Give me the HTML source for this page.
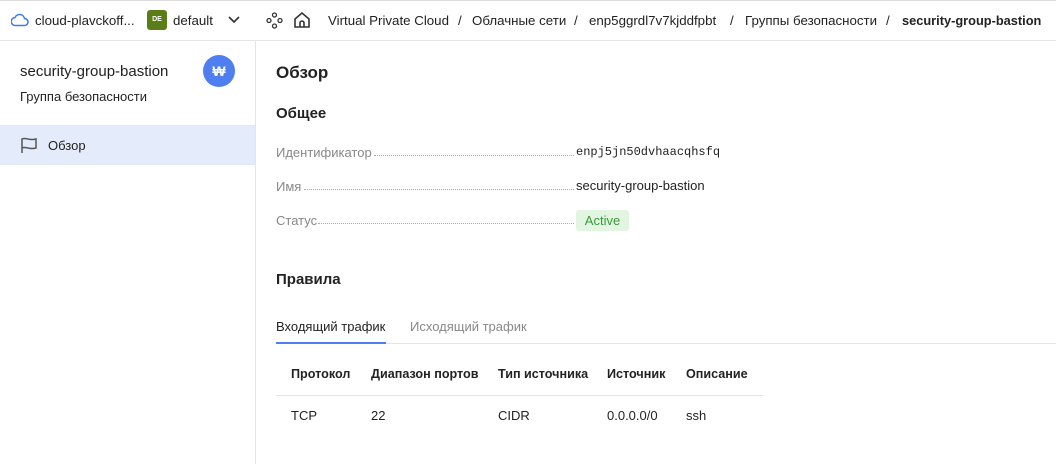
<!DOCTYPE html>
<html><head><meta charset="utf-8"><style>
*{margin:0;padding:0;box-sizing:border-box}
body{width:1056px;height:464px;overflow:hidden;background:#fff;font-family:"Liberation Sans","Noto Sans CJK SC",sans-serif;color:#222;font-size:13px;position:relative}
.a{position:absolute;white-space:nowrap}
.hdr{position:absolute;left:0;top:0;width:1056px;height:41px;border-bottom:1px solid #e5e5e5;border-top:1px solid #ddd}
.side{position:absolute;left:0;top:41px;width:256px;height:423px;border-right:1px solid #e5e5e5}
.lbl{color:#888;font-size:13px}
.dots{position:absolute;border-bottom:1px dotted #aaa;height:1px}
.bc{position:absolute;top:13px;font-size:13.3px;white-space:nowrap}
</style></head><body>
<div class="hdr"></div>
<svg class="a" style="left:11px;top:13px" width="18" height="14" viewBox="0 0 18 14"><path d="M4.5 12.5h9a3.5 3.5 0 0 0 0-7 5 5 0 0 0-9.5-1A4 4 0 0 0 4.5 12.5z" fill="none" stroke="#3d7be6" stroke-width="1.5"/></svg>
<div class="a" style="left:35px;top:13px;font-size:13.3px">cloud-plavckoff...</div>
<div class="a" style="left:147px;top:10px;width:20px;height:20px;background:#5b7d17;border-radius:3px;color:#fff;font-size:7px;font-weight:bold;text-align:center;line-height:20px">DE</div>
<div class="a" style="left:173px;top:13px;font-size:13.3px">default</div>
<svg class="a" style="left:228px;top:16px" width="12" height="8"><path d="M1 1l5 5 5-5" fill="none" stroke="#333" stroke-width="1.6"/></svg>
<svg class="a" style="left:266px;top:12px" width="17" height="17" viewBox="0 0 17 17" fill="none" stroke="#333" stroke-width="1.3"><circle cx="8.5" cy="3" r="2"/><circle cx="3" cy="8.5" r="2"/><circle cx="14" cy="8.5" r="2"/><circle cx="8.5" cy="14" r="2"/></svg>
<svg class="a" style="left:293px;top:11px" width="18" height="18" viewBox="0 0 18 18" fill="none" stroke="#333" stroke-width="1.6"><path d="M2 8L9 2l7 6v8H2z"/><path d="M7 16v-4a2 2 0 0 1 4 0v4"/></svg>
<div class="bc" style="left:328px">Virtual Private Cloud</div>
<div class="bc" style="left:458px">/</div>
<div class="bc" style="left:472px">Облачные сети</div>
<div class="bc" style="left:574px">/</div>
<div class="bc" style="left:589px">enp5ggrdl7v7kjddfpbt</div>
<div class="bc" style="left:730px">/</div>
<div class="bc" style="left:745px">Группы безопасности</div>
<div class="bc" style="left:886px">/</div>
<div class="bc" style="left:902px;font-weight:bold;font-size:12.8px">security-group-bastion</div>

<div class="side"></div>
<div class="a" style="left:20px;top:63px;font-size:15px">security-group-bastion</div>
<div class="a" style="left:20px;top:89px;font-size:13px">Группа безопасности</div>
<div class="a" style="left:203px;top:55px;width:32px;height:32px;border-radius:50%;background:#4f7ef0;color:#fff;text-align:center;line-height:32px;font-weight:bold;font-size:14px">₩</div>
<div class="a" style="left:0;top:125px;width:255px;height:40px;background:#e4ebfa"></div>
<svg class="a" style="left:20px;top:137px" width="18" height="17" viewBox="0 0 18 17" fill="none" stroke="#555" stroke-width="1.5"><path d="M2 16V2c4-2 7 2 14 0v9c-7 2-10-2-14 0"/></svg>
<div class="a" style="left:48px;top:138px;font-size:13px">Обзор</div>

<div class="a" style="left:276px;top:63px;font-size:17px;font-weight:bold">Обзор</div>
<div class="a" style="left:276px;top:105px;font-size:15px;font-weight:bold">Общее</div>
<div class="a lbl" style="left:276px;top:145px">Идентификатор</div><div class="dots" style="left:374px;width:200px;top:155px"></div>
<div class="a" style="left:576px;top:145px;font-family:'Liberation Mono',monospace;font-size:12px">enpj5jn50dvhaacqhsfq</div>
<div class="a lbl" style="left:276px;top:179px">Имя</div><div class="dots" style="left:304px;width:270px;top:189px"></div>
<div class="a" style="left:576px;top:178px;font-size:13px">security-group-bastion</div>
<div class="a lbl" style="left:276px;top:213px">Статус</div><div class="dots" style="left:318px;width:256px;top:223px"></div>
<div class="a" style="left:576px;top:210px;width:53px;height:21px;background:#e1f5e1;color:#3a9a3a;border-radius:3px;text-align:center;line-height:21px;font-size:13px">Active</div>

<div class="a" style="left:276px;top:271px;font-size:15px;font-weight:bold">Правила</div>
<div class="a" style="left:276px;top:319px;font-size:13px">Входящий трафик</div>
<div class="a" style="left:410px;top:319px;font-size:13px;color:#888">Исходящий трафик</div>
<div class="a" style="left:276px;top:343px;width:780px;height:1px;background:#e5e5e5"></div>
<div class="a" style="left:276px;top:342px;width:110px;height:2px;background:#4f7ef0"></div>
<div class="a" style="left:291px;top:367px;font-weight:bold;font-size:12.6px">Протокол</div>
<div class="a" style="left:371px;top:367px;font-weight:bold;font-size:12.6px">Диапазон портов</div>
<div class="a" style="left:498px;top:367px;font-weight:bold;font-size:12.6px">Тип источника</div>
<div class="a" style="left:607px;top:367px;font-weight:bold;font-size:12.6px">Источник</div>
<div class="a" style="left:686px;top:367px;font-weight:bold;font-size:12.6px">Описание</div>
<div class="a" style="left:276px;top:395px;width:487px;height:1px;background:#e5e5e5"></div>
<div class="a" style="left:291px;top:408px">TCP</div>
<div class="a" style="left:371px;top:408px">22</div>
<div class="a" style="left:498px;top:408px">CIDR</div>
<div class="a" style="left:607px;top:408px">0.0.0.0/0</div>
<div class="a" style="left:686px;top:408px">ssh</div>
</body></html>
